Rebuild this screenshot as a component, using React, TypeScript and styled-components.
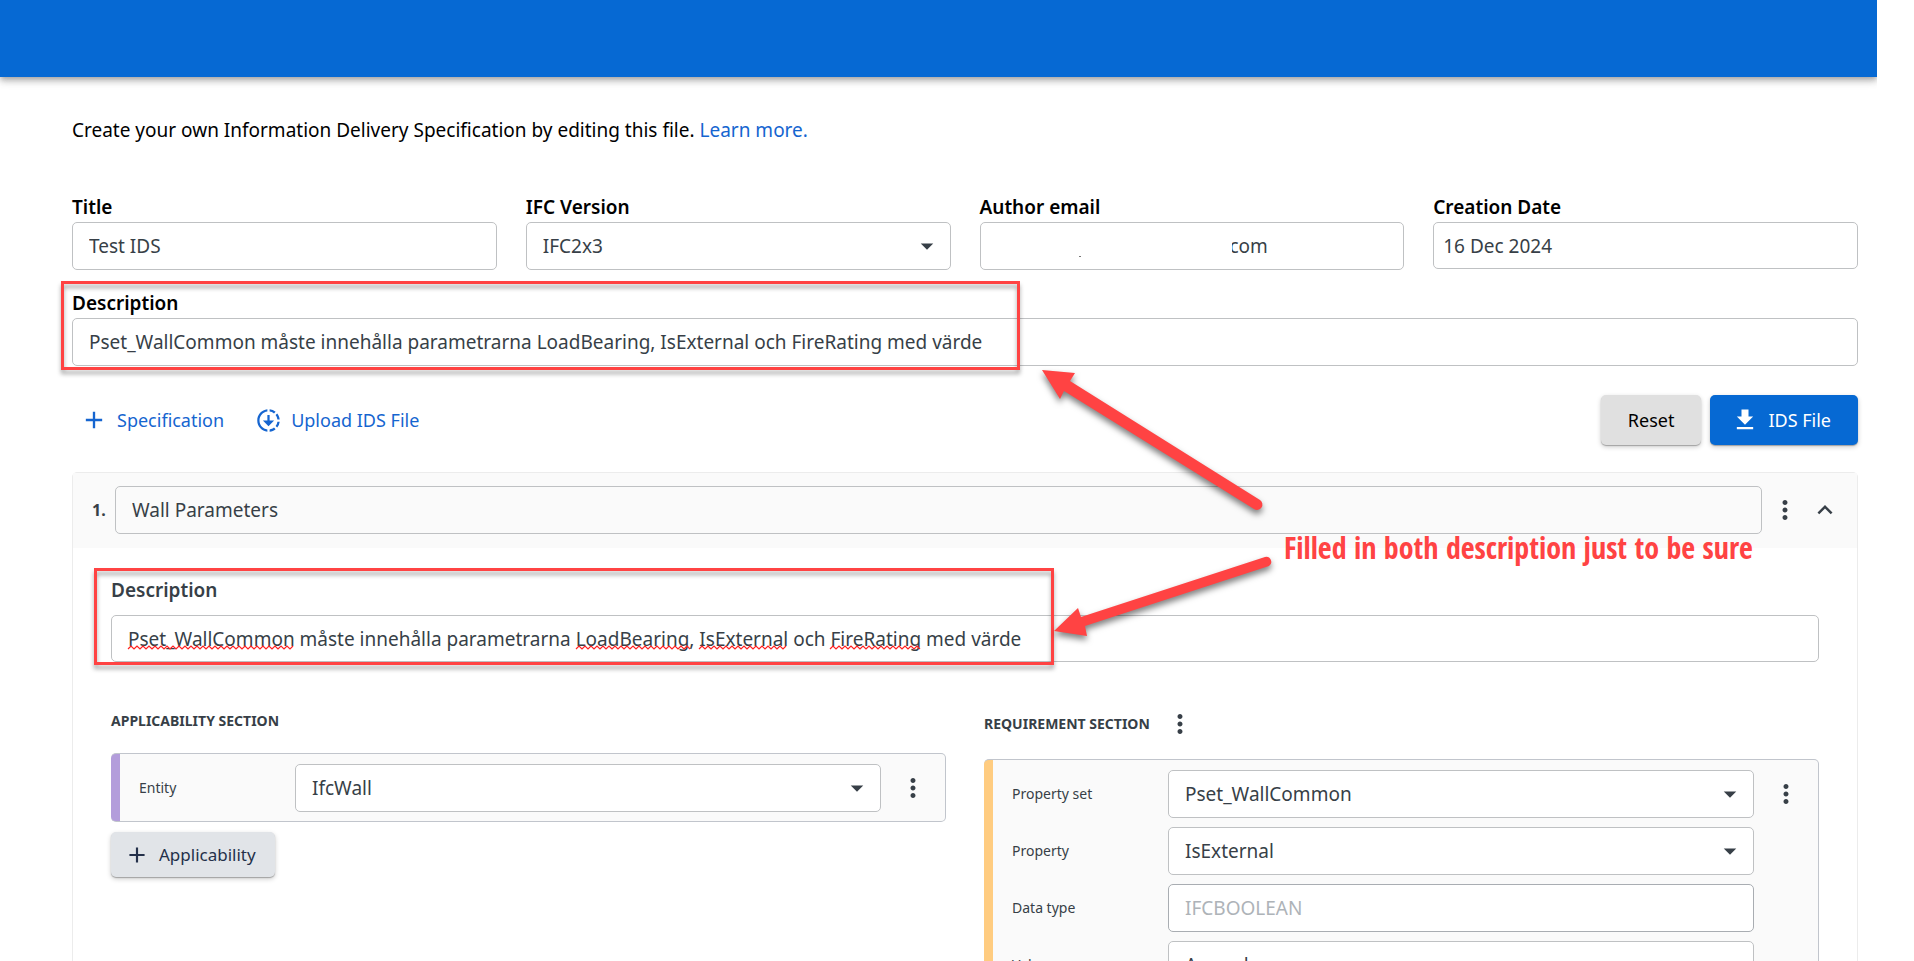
import React from "react";
import styled, { createGlobalStyle, css } from "styled-components";
import {
  MdAdd,
  MdArrowDropDown,
  MdDownloading,
  MdExpandLess,
  MdFileDownload,
  MdMoreVert,
} from "react-icons/md";

const BLUE = "#0669d3";
const INK = "#373f47";
const MARK = "#ff4343";

const GlobalStyle = createGlobalStyle`
  *, *::before, *::after { box-sizing: border-box; }
  body {
    margin: 0;
    background: #fff;
    color: #000;
    font-family: "Noto Sans", "Open Sans", sans-serif;
    font-size: 19px;
    line-height: 30px;
  }
  button, input, select { font: inherit; color: inherit; }
`;

const Page = styled.div`
  position: relative;
  height: 100vh;
  overflow: hidden;
  padding-right: 37px;
`;

const Shell = styled.div`
  overflow: hidden;
`;

const AppBar = styled.header`
  height: 77px;
  background: ${BLUE};
  box-shadow:
    0 2px 5px -1px rgba(0, 0, 0, 0.22),
    0 5px 6px rgba(0, 0, 0, 0.15),
    0 1px 12px rgba(0, 0, 0, 0.13);
`;

const Main = styled.main`
  padding: 38px 19px 40px 72px;
`;

const Intro = styled.p`
  margin: 0 0 47px;
`;

const TextLink = styled.a`
  color: #1565d0;
  text-decoration: none;
`;

const FieldGrid = styled.div`
  display: grid;
  grid-template-columns: repeat(4, minmax(0, 1fr));
  gap: 18px 29px;
`;

const Field = styled.div<{ $wide?: boolean }>`
  display: flex;
  flex-direction: column;
  ${(p) => p.$wide && css`grid-column: 1 / -1;`}
`;

const Label = styled.label<{ $spaced?: boolean }>`
  font-weight: 600;
  margin-bottom: ${(p) => (p.$spaced ? 10 : 0)}px;
`;

const Control = styled.div`
  position: relative;
  flex: 1;
  min-width: 0;
`;

const boxed = css`
  display: block;
  width: 100%;
  height: 48px;
  border: 1px solid #bfc1c3;
  border-radius: 5px;
  background: #fff;
  color: ${INK};
  outline: none;
`;

const TextInput = styled.input<{ $compact?: boolean; $clear?: boolean; $inset?: number }>`
  ${boxed}
  padding: 0 16px 0 ${(p) => p.$inset ?? 16}px;
  ${(p) => p.$compact && css`height: 47px;`}
  ${(p) => p.$clear && css`background: transparent;`}
  &:disabled {
    color: #aeb3b8;
    border-color: #a9adb2;
  }
`;

const SelectInput = styled.select`
  ${boxed}
  appearance: none;
  padding: 0 48px 0 16px;
`;

const SelectArrow = styled(MdArrowDropDown)`
  position: absolute;
  right: 9px;
  top: 9px;
  color: ${INK};
  pointer-events: none;
`;

/* Blank patch hiding the private part of the address. */
const Redaction = styled.span`
  position: absolute;
  left: 8px;
  top: 8px;
  width: 244px;
  height: 32px;
  background: #fff;
  &::after {
    content: "";
    position: absolute;
    left: 91px;
    top: 26px;
    width: 2px;
    height: 1px;
    background: #777;
  }
`;

const Toolbar = styled.div`
  display: flex;
  align-items: center;
  justify-content: space-between;
  margin: 29px 0 27px;
`;

const ToolGroup = styled.div<{ $gap: number }>`
  display: flex;
  align-items: center;
  gap: ${(p) => p.$gap}px;
`;

const FlatButton = styled.button`
  display: flex;
  align-items: center;
  gap: 9px;
  height: 46px;
  padding: 0 8px;
  border: 0;
  background: none;
  color: #1565d0;
  font-size: 18px;
`;

const raised = {
  grey: ["#e0e0e0", "#000"],
  blue: [BLUE, "#fff"],
  slate: ["#e1e4e8", "#24304a"],
};

const RaisedButton = styled.button<{ $tone: keyof typeof raised; $small?: boolean }>`
  display: flex;
  align-items: center;
  gap: 9px;
  height: ${(p) => (p.$small ? 45 : 50)}px;
  padding: ${(p) => (p.$small ? "0 19px" : "0 27px")};
  border: 0;
  border-radius: 5px;
  background: ${(p) => raised[p.$tone][0]};
  color: ${(p) => raised[p.$tone][1]};
  font-size: ${(p) => (p.$small ? 17 : 18)}px;
  box-shadow:
    0 1px 1px rgba(0, 0, 0, 0.26),
    0 2px 5px rgba(0, 0, 0, 0.2);
  svg { margin-left: -6px; }
`;

const IconButton = styled.button`
  display: flex;
  align-items: center;
  justify-content: center;
  width: 30px;
  height: 30px;
  flex: none;
  padding: 0;
  border: 0;
  background: none;
  color: ${INK};
`;

const Specification = styled.section`
  border: 1px solid #ececec;
  border-radius: 5px;
  color: ${INK};
`;

const SpecificationHead = styled.div`
  display: flex;
  align-items: center;
  gap: 8px;
  height: 75px;
  padding: 0 17px 2px 19px;
  background: #fafafa;
`;

const Ordinal = styled.label`
  width: 15px;
  font-size: 16px;
  font-weight: 700;
`;

const SpecificationBody = styled.div`
  padding: 27px 38px;
`;

const Columns = styled.div`
  display: grid;
  grid-template-columns: repeat(2, minmax(0, 1fr));
  align-items: start;
  gap: 38px;
  margin-top: 47px;
`;

const SectionHead = styled.div`
  display: flex;
  align-items: center;
  gap: 15px;
  margin-bottom: 20px;
`;

const SectionTitle = styled.h2`
  margin: 0;
  font-size: 14px;
  line-height: 24px;
  font-weight: 700;
`;

const FacetCard = styled.div<{ $accent: string }>`
  display: flex;
  flex-direction: column;
  gap: 9px;
  padding: 10px 0 9px 28px;
  border: 1px solid #c1c5cc;
  border-left: 0;
  border-radius: 5px;
  background: linear-gradient(to right, ${(p) => p.$accent} 9px, #fafafa 9px);
`;

const FacetRow = styled.div`
  display: grid;
  grid-template-columns: 156px minmax(0, 1fr) 64px;
  align-items: center;
`;

const FacetLabel = styled.label`
  font-size: 14px;
`;

const FacetMenu = styled(IconButton)`
  justify-self: center;
`;

const AddRow = styled.div`
  display: flex;
  margin-top: 10px;
`;

const Outline = styled.div<{ $x: number; $y: number; $w: number; $h: number }>`
  position: absolute;
  left: ${(p) => p.$x}px;
  top: ${(p) => p.$y}px;
  width: ${(p) => p.$w}px;
  height: ${(p) => p.$h}px;
  border: 3px solid ${MARK};
  filter: drop-shadow(0 4px 2px rgba(0, 0, 0, 0.35));
  pointer-events: none;
`;

const Arrows = styled.svg`
  position: absolute;
  left: 1040px;
  top: 350px;
  overflow: visible;
  filter: drop-shadow(0 4px 3px rgba(0, 0, 0, 0.5));
  pointer-events: none;
`;

const Note = styled.p`
  position: absolute;
  left: 1284px;
  top: 524px;
  margin: 0;
  color: ${MARK};
  font-family: "Liberation Sans Narrow", "Noto Sans Condensed", "Open Sans Condensed", "Liberation Sans", sans-serif;
  font-size: 30px;
  line-height: 48px;
  font-weight: 700;
  white-space: nowrap;
`;

const Squiggles = styled.svg`
  position: absolute;
  left: 17px;
  top: 31px;
  overflow: visible;
  pointer-events: none;
`;

const DESCRIPTION =
  "Pset_WallCommon måste innehålla parametrarna LoadBearing, IsExternal och FireRating med värde";

/* Start and end of each misspelled word, measured from the text's left edge. */
const MISSPELLED: Array<[number, number]> = [
  [0, 166],
  [448, 563],
  [571, 660],
  [702, 793],
];

function wave(from: number, to: number) {
  let d = `M${from} 3`;
  for (let x = from + 3, up = true; x <= to; x += 3, up = !up) d += `L${x} ${up ? 0 : 3}`;
  return d;
}

function SelectField({ id, value }: { id: string; value: string }) {
  return (
    <Control>
      <SelectInput id={id} defaultValue={value}>
        <option>{value}</option>
      </SelectInput>
      <SelectArrow size={30} />
    </Control>
  );
}

export default function App() {
  return (
    <Page>
      <GlobalStyle />
      <Shell>
        <AppBar />
        <Main>
          <Intro>
            Create your own Information Delivery Specification by editing this file.{" "}
            <TextLink href="#learn">Learn more.</TextLink>
          </Intro>

          <FieldGrid>
            <Field>
              <Label htmlFor="title">Title</Label>
              <TextInput id="title" defaultValue="Test IDS" />
            </Field>
            <Field>
              <Label htmlFor="version">IFC Version</Label>
              <SelectField id="version" value="IFC2x3" />
            </Field>
            <Field>
              <Label htmlFor="email">Author email</Label>
              <Control>
                <TextInput id="email" defaultValue="com" $inset={249} />
                <Redaction />
              </Control>
            </Field>
            <Field>
              <Label htmlFor="date">Creation Date</Label>
              <TextInput id="date" defaultValue="16 Dec 2024" $compact $inset={9} />
            </Field>
            <Field $wide>
              <Label htmlFor="description">Description</Label>
              <TextInput id="description" defaultValue={DESCRIPTION} spellCheck={false} />
            </Field>
          </FieldGrid>

          <Toolbar>
            <ToolGroup $gap={15}>
              <FlatButton>
                <MdAdd size={28} />
                Specification
              </FlatButton>
              <FlatButton>
                <MdDownloading size={27} />
                Upload IDS File
              </FlatButton>
            </ToolGroup>
            <ToolGroup $gap={9}>
              <RaisedButton $tone="grey">Reset</RaisedButton>
              <RaisedButton $tone="blue">
                <MdFileDownload size={28} />
                IDS File
              </RaisedButton>
            </ToolGroup>
          </Toolbar>

          <Specification>
            <SpecificationHead>
              <Ordinal htmlFor="spec-name">1.</Ordinal>
              <Control>
                <TextInput id="spec-name" defaultValue="Wall Parameters" $clear />
              </Control>
              <ToolGroup $gap={10}>
                <IconButton aria-label="Specification menu">
                  <MdMoreVert size={30} />
                </IconButton>
                <IconButton aria-label="Collapse">
                  <MdExpandLess size={30} />
                </IconButton>
              </ToolGroup>
            </SpecificationHead>
            <SpecificationBody>
              <Field>
                <Label htmlFor="spec-description" $spaced>Description</Label>
                <Control>
                  <TextInput
                    id="spec-description"
                    defaultValue={DESCRIPTION}
                    spellCheck={false}
                    $compact
                  />
                  <Squiggles width="793" height="3">
                    {MISSPELLED.map(([from, to]) => (
                      <path key={from} d={wave(from, to)} fill="none" stroke="#f22" strokeWidth="1.2" />
                    ))}
                  </Squiggles>
                </Control>
              </Field>

              <Columns>
                <div>
                  <SectionHead>
                    <SectionTitle>APPLICABILITY SECTION</SectionTitle>
                  </SectionHead>
                  <FacetCard $accent="#b39ddb">
                    <FacetRow>
                      <FacetLabel htmlFor="entity">Entity</FacetLabel>
                      <SelectField id="entity" value="IfcWall" />
                      <FacetMenu aria-label="Entity menu">
                        <MdMoreVert size={30} />
                      </FacetMenu>
                    </FacetRow>
                  </FacetCard>
                  <AddRow>
                    <RaisedButton $tone="slate" $small>
                      <MdAdd size={26} />
                      Applicability
                    </RaisedButton>
                  </AddRow>
                </div>
                <div>
                  <SectionHead>
                    <SectionTitle>REQUIREMENT SECTION</SectionTitle>
                    <IconButton aria-label="Requirement menu">
                      <MdMoreVert size={30} />
                    </IconButton>
                  </SectionHead>
                  <FacetCard $accent="#ffcc80">
                    <FacetRow>
                      <FacetLabel htmlFor="pset">Property set</FacetLabel>
                      <SelectField id="pset" value="Pset_WallCommon" />
                      <FacetMenu aria-label="Property menu">
                        <MdMoreVert size={30} />
                      </FacetMenu>
                    </FacetRow>
                    <FacetRow>
                      <FacetLabel htmlFor="property">Property</FacetLabel>
                      <SelectField id="property" value="IsExternal" />
                    </FacetRow>
                    <FacetRow>
                      <FacetLabel htmlFor="datatype">Data type</FacetLabel>
                      <TextInput id="datatype" defaultValue="IFCBOOLEAN" disabled />
                    </FacetRow>
                    <FacetRow>
                      <FacetLabel htmlFor="value">Value</FacetLabel>
                      <SelectField id="value" value="Any value" />
                    </FacetRow>
                  </FacetCard>
                </div>
              </Columns>
            </SpecificationBody>
          </Specification>
        </Main>
      </Shell>

      <Outline $x={61} $y={281} $w={959} $h={89} />
      <Outline $x={94} $y={568} $w={960} $h={97} />
      <Arrows width="240" height="300" fill={MARK}>
        <path d="M2 20L35 23L30 31L220 150A5 5 0 0 1 214 159L24 41L20 49Z" />
        <path d="M14 281L38 258L41 267L225 207A5 5 0 0 1 229 216L45 276L47 286Z" />
      </Arrows>
      <Note>Filled in both description just to be sure</Note>
    </Page>
  );
}
